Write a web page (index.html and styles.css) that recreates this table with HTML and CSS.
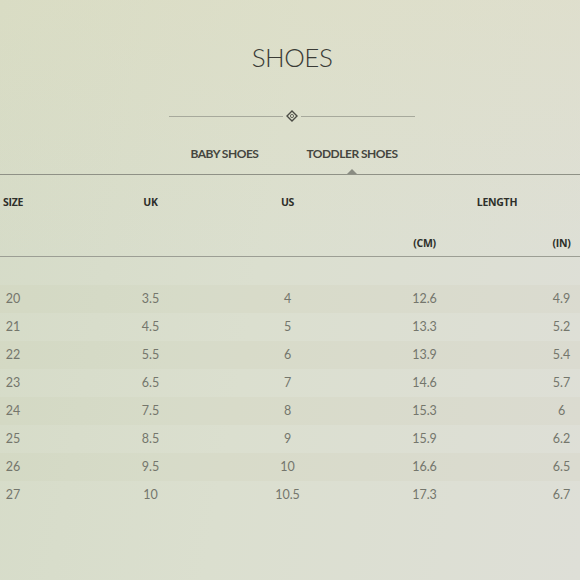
FILE: index.html
```html
<!DOCTYPE html>
<html>
<head>
<meta charset="utf-8">
<link rel="stylesheet" href="styles.css">
</head>
<body>
<div class="page">
  <h1 class="title">SHOES</h1>
  <div class="divider">
    <span class="rule"></span>
    <svg class="ornament" width="12" height="12" viewBox="0 0 12 12"><path d="M6 1 L11 6 L6 11 L1 6 Z" fill="none" stroke="#4a4b44" stroke-width="1.4"/><circle cx="6" cy="6" r="1.6" fill="none" stroke="#4a4b44" stroke-width="0.8"/></svg>
    <span class="rule"></span>
  </div>
  <div class="tabs">
    <span class="tab">BABY SHOES</span>
    <span class="tab tab-active">TODDLER SHOES</span>
  </div>
  <div class="table">
    <div class="thead">
      <div class="hrow">
        <span class="c1">SIZE</span><span>UK</span><span>US</span><span class="span2">LENGTH</span>
      </div>
      <div class="hrow">
        <span class="c1"></span><span></span><span></span><span>(CM)</span><span class="c5">(IN)</span>
      </div>
    </div>
    <div class="tbody">
      <div class="row odd"><span class="c1">20</span><span>3.5</span><span>4</span><span>12.6</span><span class="c5">4.9</span></div>
      <div class="row"><span class="c1">21</span><span>4.5</span><span>5</span><span>13.3</span><span class="c5">5.2</span></div>
      <div class="row odd"><span class="c1">22</span><span>5.5</span><span>6</span><span>13.9</span><span class="c5">5.4</span></div>
      <div class="row"><span class="c1">23</span><span>6.5</span><span>7</span><span>14.6</span><span class="c5">5.7</span></div>
      <div class="row odd"><span class="c1">24</span><span>7.5</span><span>8</span><span>15.3</span><span class="c5">6</span></div>
      <div class="row"><span class="c1">25</span><span>8.5</span><span>9</span><span>15.9</span><span class="c5">6.2</span></div>
      <div class="row odd"><span class="c1">26</span><span>9.5</span><span>10</span><span>16.6</span><span class="c5">6.5</span></div>
      <div class="row"><span class="c1">27</span><span>10</span><span>10.5</span><span>17.3</span><span class="c5">6.7</span></div>
    </div>
  </div>
</div>
</body>
</html>
```
FILE: styles.css
```css
html, body {
  margin: 0;
  padding: 0;
}
body {
  width: 580px;
  height: 580px;
  overflow: hidden;
  background: linear-gradient(100deg, #d5dbc7 0%, #dbdfcf 45%, #dedfd7 100%);
  font-family: Lato, "Open Sans", sans-serif;
}
.page {
  width: 580px;
  height: 580px;
  background: linear-gradient(180deg, rgba(225,222,190,0.35) 0%, rgba(225,222,190,0) 45%);
}
.title {
  margin: 0;
  padding-top: 42px;
  height: 30px;
  line-height: 30px;
  text-align: center;
  font-size: 26px;
  font-weight: 300;
  letter-spacing: -0.5px;
  color: #3a3b36;
  padding-left: 4px;
}
.divider {
  margin: 38px auto 0;
  width: 246px;
  height: 12px;
  display: flex;
  align-items: center;
  gap: 3px;
  padding-left: 4px;
}
.rule {
  flex: 1;
  height: 1px;
  background: #a7a99c;
}
.ornament {
  display: block;
}
.tabs {
  margin-top: 24px;
  display: flex;
  justify-content: center;
  gap: 48px;
  padding-left: 8px;
  padding-bottom: 12px;
  border-bottom: 1px solid #8f9186;
  height: 16px;
  line-height: 16px;
}
.tab {
  position: relative;
  font-size: 12px;
  font-weight: 700;
  letter-spacing: -0.5px;
  color: #45463f;
}
.tab-active::after {
  content: "";
  position: absolute;
  left: 50%;
  margin-left: -5px;
  top: 23px;
  border-left: 5px solid transparent;
  border-right: 5px solid transparent;
  border-bottom: 5px solid #8a8c82;
}
.table {
  width: 580px;
}
.thead {
  padding-top: 20px;
  padding-bottom: 6px;
  border-bottom: 1px solid #9c9e94;
  display: flex;
  flex-direction: column;
  gap: 27px;
}
.hrow,
.row {
  display: grid;
  grid-template-columns: 82px 137px 137px 137px 87px;
  text-align: center;
}
.hrow {
  height: 14px;
  line-height: 14px;
  font-family: "Open Sans", sans-serif;
  font-weight: 700;
  font-size: 10.5px;
  letter-spacing: -0.3px;
  color: #2e2f2a;
}
.c1 {
  padding-right: 56px;
}
.c5 {
  padding-left: 50px;
}
.span2 {
  grid-column: span 2;
  padding-left: 58px;
}
.tbody {
  padding-top: 28px;
}
.row {
  height: 28px;
  line-height: 28px;
  font-size: 12.5px;
  color: #74766c;
}
.row.odd {
  background: rgba(195, 197, 165, 0.12);
}
```
